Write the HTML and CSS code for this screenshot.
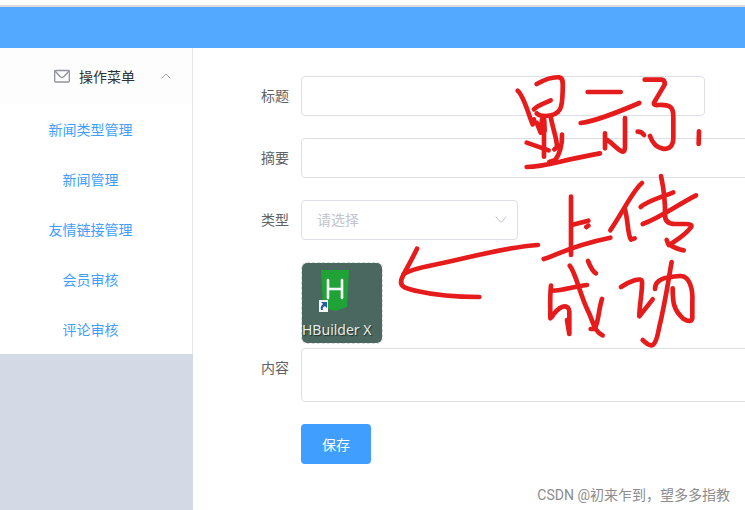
FILE: index.html
```html
<!DOCTYPE html>
<html lang="zh-CN">
<head>
  <meta charset="UTF-8">
  <title>新闻管理</title>
  <link rel="stylesheet" href="styles.css">
</head>
<body>
  <header class="header"></header>

  <div class="container">
    <aside class="aside">
      <nav class="menu">
        <button type="button" class="menu-title">
          <svg class="icon-mail" viewBox="0 0 16 14" width="16" height="14">
            <rect x="0.7" y="1.5" width="14.6" height="11.5" rx="1"/>
            <path d="M1 2 L6 7.5 Q8 9.2 10 7.5 L15 2"/>
          </svg>
          <span>操作菜单</span>
          <svg class="icon-arrow" viewBox="0 0 10 6" width="10" height="6">
            <path d="M1 5 L5 1 L9 5"/>
          </svg>
        </button>
        <a class="menu-item" href="#">新闻类型管理</a>
        <a class="menu-item" href="#">新闻管理</a>
        <a class="menu-item" href="#">友情链接管理</a>
        <a class="menu-item" href="#">会员审核</a>
        <a class="menu-item" href="#">评论审核</a>
      </nav>
    </aside>

    <main class="main">
      <form class="form">
        <div class="form-item">
          <label for="title">标题</label>
          <input type="text" id="title" class="input input-title">
        </div>
        <div class="form-item">
          <label for="summary">摘要</label>
          <input type="text" id="summary" class="input">
        </div>
        <div class="form-item">
          <label for="type">类型</label>
          <div class="select-box">
            <select id="type" class="input">
              <option>请选择</option>
            </select>
            <svg class="icon-down" viewBox="0 0 12 8" width="12" height="8">
              <path d="M1 1 L6 6.5 L11 1"/>
            </svg>
          </div>
        </div>
        <div class="form-item form-upload">
          <div class="upload">
            <svg viewBox="0 0 80 80" width="80" height="80">
              <path fill="#1fa336" d="M19 7 H47 L45 44 L33 48 L21 44 Z"/>
              <path class="logo-h" d="M26 17 V35 M40 17 V35 M26 26 H40"/>
              <rect x="17" y="37" width="9" height="12" fill="#f4f6fa"/>
              <path fill="#2c5aa0" d="M19 39 H25 V45 L23 43 Q20 44 21 47 H19 Q18 43 21 41 Z"/>
              <text class="logo-text" x="0" y="72">HBuilder X</text>
            </svg>
          </div>
        </div>
        <div class="form-item">
          <label for="content">内容</label>
          <textarea id="content" class="input textarea"></textarea>
        </div>
        <div class="form-item form-submit">
          <button type="button" class="btn">保存</button>
        </div>
      </form>
    </main>
  </div>

  <!-- handwritten notes -->
  <svg class="notes" viewBox="0 0 2235 1530" width="745" height="510">
    <g transform="translate(1500 180)">
      <path d="M53 92 C72 108 84 160 98 193 L102 178"/>
      <path d="M110 72 C135 58 160 50 178 52 C190 54 189 70 188 90 C187 135 188 168 135 168 Q118 168 110 160"/>
      <path d="M102 148 C112 136 130 131 152 121"/>
      <path d="M110 188 L122 218 L126 178 M132 180 L134 212"/>
      <path d="M132 168 V290"/>
      <path d="M152 170 C158 205 172 240 171 262 L163 268"/>
      <path d="M186 224 C188 255 177 285 166 300 L148 306"/>
      <path d="M80 248 L146 271"/>
      <path d="M80 321 C140 320 175 302 300 280"/>
      <path d="M263 96 H362"/>
      <path d="M242 189 C285 185 350 158 418 129"/>
      <path d="M315 220 V265 M317 238 C330 240 350 270 368 275 Q376 275 375 255 V174"/>
      <path d="M413 215 Q425 215 432 225"/>
      <path d="M434 59 H485 Q495 60 494 74 L462 128 Q460 137 475 135 C515 133 520 145 520 170 V235 C519 265 500 268 488 266 C465 262 456 245 450 228"/>
      <path d="M597 214 L596 252"/>
    </g>
    <g transform="translate(1500 495)">
      <path d="M213 95 V270 M215 180 L265 167 M259 186 L265 182"/>
      <path d="M131 282 C170 272 200 245 331 218"/>
      <path d="M426 54 C400 75 378 125 331 196"/>
      <path d="M374 130 C385 165 382 210 393 224 L404 220"/>
      <path d="M422 126 C440 109 475 100 520 82"/>
      <path d="M428 177 C480 158 525 124 588 91"/>
      <path d="M483 33 C492 75 496 110 495 150 Q495 177 525 177 H560 Q580 177 572 188 C555 210 520 233 506 240 L500 225 M506 238 Q530 253 551 256"/>
      <path d="M264 288 Q277 320 288 325"/>
      <path d="M209 302 C227 322 240 390 265 440 C280 470 282 500 308 511"/>
      <path d="M153 362 C149 395 151 430 151 460 Q158 455 162 446 C185 418 207 418 208 440 V507 L201 465"/>
      <path d="M153 377 C190 378 215 365 261 360"/>
      <path d="M306 402 C295 435 295 480 283 492 L272 492"/>
      <path d="M363 366 C388 350 425 334 426 350 C428 375 418 420 418 454 L458 403"/>
      <path d="M465 372 C465 340 500 336 540 333 C570 331 579 375 577 410 V460 Q573 475 550 461 C520 435 518 410 518 370"/>
      <path d="M515 291 C505 345 498 400 477 490 C466 550 455 551 428 525"/>
    </g>
    <g transform="translate(870 570)">
      <path d="M744 165 C650 170 530 205 430 225 C390 233 355 241 341 253"/>
      <path d="M381 176 C365 210 350 235 338 259 C322 291 348 296 380 303 C445 318 500 321 568 321"/>
    </g>
  </svg>

  <footer class="watermark">CSDN @初来乍到，望多多指教</footer>
</body>
</html>
```
FILE: styles.css
```css
* {
  box-sizing: border-box;
}

body {
  margin: 0;
  padding-top: 5px;
  height: 100vh;
  display: flex;
  flex-direction: column;
  overflow: hidden;
  position: relative;
  background: #fff;
  font-family: "Liberation Sans", "Noto Sans CJK SC", sans-serif;
  font-size: 14px;
  color: #606266;
}

svg path {
  stroke-linecap: round;
  stroke-linejoin: round;
}

.header {
  height: 43px;
  flex: none;
  background-color: #53a8ff;
  border-top: 2px solid #dcdcdc;
}

.container {
  flex: 1;
  display: flex;
  min-height: 0;
}

.aside {
  width: 193px;
  flex: none;
  background-color: #d3dae6;
}

.menu {
  display: flex;
  flex-direction: column;
  background-color: #fff;
  border-right: 1px solid #e6e6e6;
}

.menu-title {
  display: flex;
  align-items: center;
  height: 56px;
  padding: 0 21px 0 54px;
  border: none;
  background-color: #fdfdfd;
  font: inherit;
  color: #303133;
  cursor: pointer;
}

.icon-mail {
  margin-right: 9px;
  fill: none;
  stroke: #909399;
  stroke-width: 1.3;
}

.icon-arrow {
  margin-left: auto;
  fill: none;
  stroke: #a8a4a2;
}

.menu-item {
  height: 50px;
  line-height: 52px;
  padding-right: 11px;
  text-align: center;
  color: #409eff;
  text-decoration: none;
}

.main {
  flex: 1;
  min-width: 0;
  padding: 28px;
  overflow: hidden;
}

.form {
  min-width: 840px;
}

.form-item {
  display: flex;
  margin-bottom: 22px;
}

.form-item label {
  width: 80px;
  flex: none;
  padding-right: 12px;
  text-align: right;
  line-height: 40px;
}

.input {
  width: 100%;
  height: 40px;
  padding: 0 15px;
  border: 1px solid #dcdfe6;
  border-radius: 4px;
  outline: none;
  background-color: #fff;
  font: inherit;
}

.input-title {
  width: 404px;
}

.select-box {
  position: relative;
  width: 217px;
}

.select-box select {
  appearance: none;
  color: #c0c4cc;
}

.icon-down {
  position: absolute;
  right: 11px;
  top: 16px;
  fill: none;
  stroke: #c0c4cc;
  pointer-events: none;
}

.form-upload {
  margin-bottom: 4px;
  padding-left: 80px;
}

.upload {
  border: 1px dashed #d9d9d9;
  border-radius: 6px;
  overflow: hidden;
  background-color: #4a685f;
  background-clip: padding-box;
}

.upload svg {
  display: block;
}

.logo-h {
  fill: none;
  stroke: #fff;
  stroke-width: 2.6;
}

.logo-text {
  font-family: "Noto Sans", sans-serif;
  font-size: 14px;
  fill: #e8ecec;
  text-shadow: 1px 1px 1px #1d2f2a;
}

.textarea {
  display: block;
  height: 54px;
  padding: 5px 15px;
  resize: none;
}

.form-submit {
  padding-left: 80px;
}

.btn {
  height: 40px;
  padding: 0 21px;
  border: none;
  border-radius: 4px;
  background-color: #409eff;
  color: #fff;
  font: inherit;
  cursor: pointer;
}

.notes {
  position: absolute;
  left: 0;
  top: 0;
  fill: none;
  stroke: #e61c1c;
  stroke-width: 14;
  pointer-events: none;
}

.watermark {
  position: absolute;
  right: 15px;
  bottom: 6px;
  font-family: Roboto, "Noto Sans CJK SC", sans-serif;
  color: #8c8c8c;
}
```
